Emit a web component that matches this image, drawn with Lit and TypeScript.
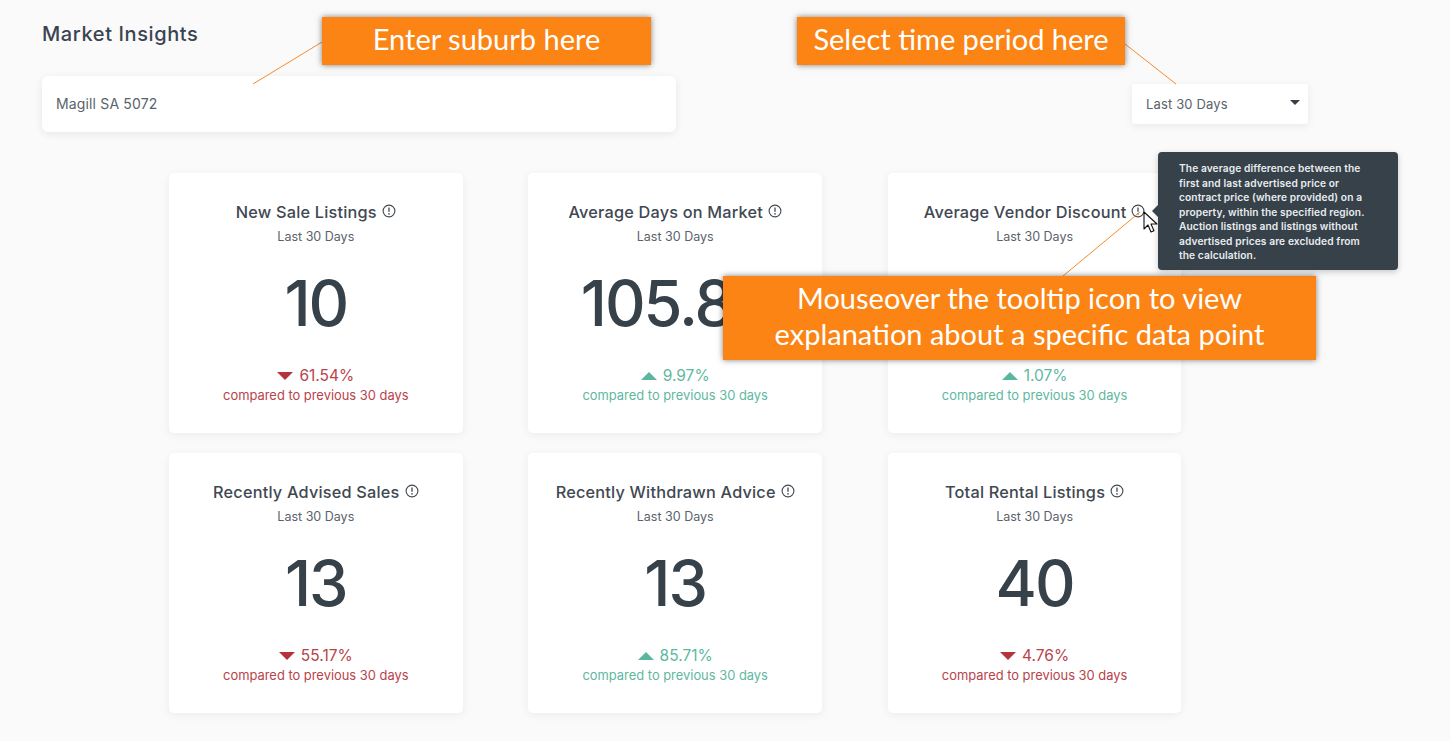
import { LitElement, html, css, svg } from "lit";
import { customElement } from "lit/decorators.js";

const cards = [
  { t: "New Sale Listings", n: "10", p: "61.54%", up: false },
  { t: "Average Days on Market", n: "105.83", p: "9.97%", up: true },
  { t: "Average Vendor Discount", n: "\u00a0", p: "1.07%", up: true },
  { t: "Recently Advised Sales", n: "13", p: "55.17%", up: false },
  { t: "Recently Withdrawn Advice", n: "13", p: "85.71%", up: true },
  { t: "Total Rental Listings", n: "40", p: "4.76%", up: false },
];

const tip = [
  "The average difference between the",
  "first and last advertised price or",
  "contract price (where provided) on a",
  "property, within the specified region.",
  "Auction listings and listings without",
  "advertised prices are excluded from",
  "the calculation.",
];

const infoIcon = svg`<svg class="info" viewBox="0 0 14 14" width="14" height="14"><circle cx="7" cy="7" r="5.9" fill="none" stroke="currentColor" stroke-width="1.1"/><path d="M7 3.4v4.4" stroke="currentColor" stroke-width="1.3" fill="none"/><circle cx="7" cy="9.9" r=".8" fill="currentColor"/></svg>`;

@customElement("app-root")
export class AppRoot extends LitElement {
  static styles = css`
    :host { display: block; position: relative; width: 1450px; height: 741px; overflow: hidden; background: #fafafa; color: #36414a; font-family: Inter, "Liberation Sans", sans-serif; }
    .page { padding: 0 0 0 42px; }
    .head { display: flex; align-items: flex-start; height: 173px; }
    .left { width: 634px; padding-top: 21px; }
    h1 { margin: 0 0 29px; font-size: 20px; line-height: 26px; font-weight: 500; letter-spacing: .6px; color: #3a4450; }
    .input { height: 56px; box-sizing: border-box; padding: 0 14px 1px; display: flex; align-items: center; background: #fff; border-radius: 6px; box-shadow: 0 2px 8px rgba(0,0,0,.08); font-size: 14px; letter-spacing: .15px; color: #5a626b; }
    .select { margin: 84px 0 0 456px; width: 176px; height: 40px; box-sizing: border-box; padding: 0 14px 1px; display: flex; align-items: center; justify-content: space-between; background: #fff; border-radius: 3px; box-shadow: 0 2px 8px rgba(0,0,0,.07); font-size: 13px; letter-spacing: .15px; color: #5a626b; }
    .caret { width: 0; height: 0; border: 5px solid transparent; border-top: 5px solid #36414a; border-bottom: 0; margin: -3px -6px 0 0; }
    .grid { margin-left: 127px; display: grid; grid-template-columns: repeat(3, 293.6px); column-gap: 65.8px; row-gap: 20px; }
    .card { height: 260px; box-sizing: border-box; background: #fff; border-radius: 5px; box-shadow: 0 2px 10px rgba(0,0,0,.06); display: flex; flex-direction: column; align-items: center; padding-top: 28px; }
    .title { display: flex; align-items: center; gap: 5px; font-size: 16.3px; line-height: 22px; font-weight: 500; letter-spacing: .2px; color: #3f4852; white-space: nowrap; }
    .info { color: #3f4852; flex: none; margin-top: -2px; }
    .sub { font-size: 12.5px; line-height: 16px; margin-top: 6px; color: #5a626b; }
    .num { font-size: 63px; line-height: 80px; margin-top: 18px; font-weight: 500; letter-spacing: -2px; color: #36414a; white-space: nowrap; }
    .pct { display: flex; align-items: center; gap: 6px; font-size: 15.5px; line-height: 20px; margin-top: 23px; font-weight: 400; }
    .tri { width: 0; height: 0; border-left: 8px solid transparent; border-right: 8px solid transparent; }
    .up .tri { border-bottom: 8px solid #5cb59d; }
    .down .tri { border-top: 8px solid #b5343c; }
    .cmp { font-size: 12.9px; line-height: 18px; margin-top: 1px; white-space: nowrap; }
    .up { color: #5fb8a0; }
    .down { color: #b9434a; }
    .down .cmp { color: #c8584f; }
    .up .cmp { color: #6cbca6; }

    .lines { position: absolute; left: 0; top: 0; pointer-events: none; }
    .callout { position: absolute; box-sizing: border-box; padding-bottom: 4px; background: #fb8414; color: #fff; font-family: Lato, "Open Sans", sans-serif; font-size: 29px; line-height: 36px; text-align: center; display: flex; align-items: center; justify-content: center; box-shadow: 0 0 6px rgba(0,0,0,.5); }
    .c1 { left: 322px; top: 17px; width: 329px; height: 48px; }
    .c2 { left: 797px; top: 17px; width: 328px; height: 48px; }
    .c3 { left: 723px; top: 276px; width: 593px; height: 84px; }
    .tooltip { position: absolute; left: 1158px; top: 152px; width: 240px; height: 118px; box-sizing: border-box; padding: 9px 0 0 21px; background: #36414a; color: #e9ecee; border-radius: 4px; box-shadow: 0 2px 6px rgba(0,0,0,.2); font-size: 10.2px; line-height: 14.5px; font-weight: 600; letter-spacing: .1px; white-space: nowrap; }
    .tooltip::before { content: ""; position: absolute; left: -6px; top: 53px; border: 6px solid transparent; border-left: 0; border-right-color: #36414a; }
    .tooltip div { display: block; }
    .cursor { position: absolute; left: 1143px; top: 211px; }
  `;

  render() {
    return html`
      <div class="page">
        <div class="head">
          <div class="left">
            <h1>Market Insights</h1>
            <div class="input">Magill SA 5072</div>
          </div>
          <div class="select">Last 30 Days<span class="caret"></span></div>
        </div>
        <div class="grid">
          ${cards.map(
            (c) => html`
              <div class="card">
                <div class="title">${c.t}${infoIcon}</div>
                <div class="sub">Last 30 Days</div>
                <div class="num">${c.n}</div>
                <div class="pct ${c.up ? "up" : "down"}"><span class="tri"></span>${c.p}</div>
                <div class="cmp ${c.up ? "up" : "down"}">compared to previous 30 days</div>
              </div>
            `
          )}
        </div>
      </div>
      <svg class="lines" width="1450" height="741">
        <path d="M322 42L253 84M1125 44L1176 84M1140 212L1063 276" stroke="#f58b2e" stroke-width="1" fill="none"/>
      </svg>
      <div class="callout c1">Enter suburb here</div>
      <div class="callout c2">Select time period here</div>
      <div class="callout c3">Mouseover the tooltip icon to view<br />explanation about a specific data point</div>
      <div class="tooltip">${tip.map((l) => html`<div>${l}</div>`)}</div>
      <svg class="cursor" width="16" height="24" viewBox="0 0 16 24"><path d="M1 1v17l4-4 3 7 3-1.3-3-6.7h6z" fill="#fff" stroke="#111" stroke-width="1.1" stroke-linejoin="round"/></svg>
    `;
  }
}
